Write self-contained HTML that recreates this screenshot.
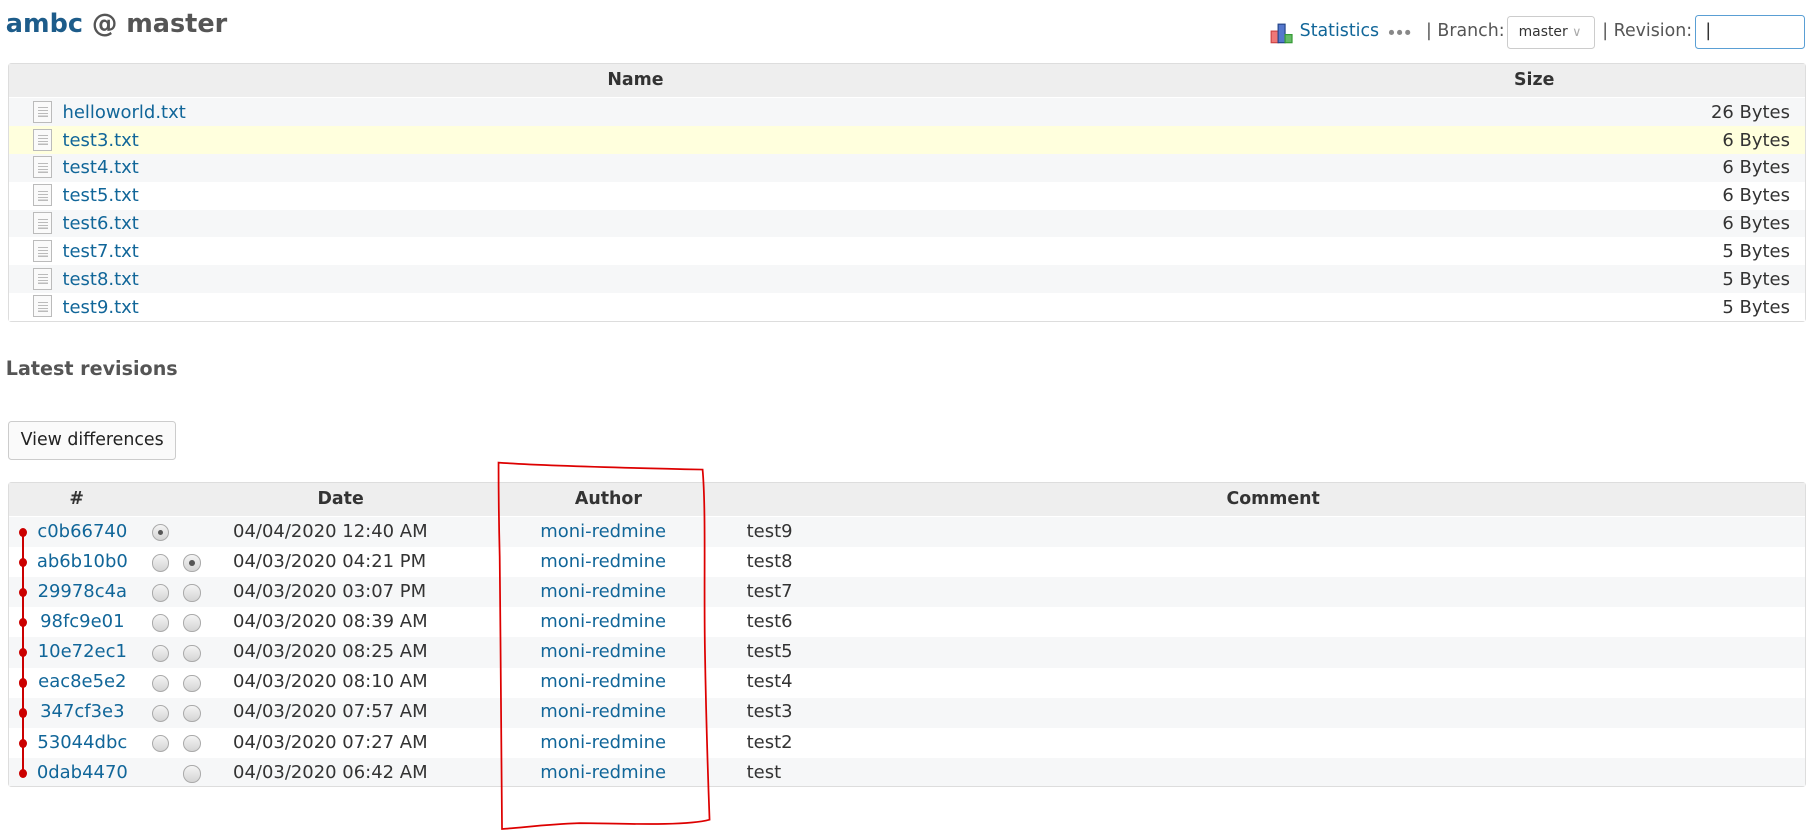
<!DOCTYPE html>
<html><head><meta charset="utf-8">
<style>
html,body{margin:0;padding:0;background:#fff;}
body{width:1568px;height:716px;overflow:hidden;zoom:1.1594;position:relative;font-family:"DejaVu Sans","Liberation Sans",sans-serif;font-size:15.5px;color:#333;}
.a{position:absolute;white-space:nowrap;}
a,.lk{color:#169;text-decoration:none;}
.t{border:1px solid #ddd;border-radius:3px;}
.row{position:absolute;left:0;right:0;}
.radio{position:absolute;width:15px;height:15px;border-radius:50%;border:1px solid #aaa;background:linear-gradient(#f4f4f4,#d4d4d4);box-sizing:border-box;}
.radio.on::after{content:"";position:absolute;left:4px;top:4px;width:5px;height:5px;border-radius:50%;background:#555;}
.fi{position:absolute;left:21px;width:16px;height:19px;border:1px solid #bbb;background:#fafafa;box-sizing:border-box;}
.fi::before{content:"";position:absolute;left:3px;right:3px;top:5px;height:9px;background:repeating-linear-gradient(#bbb 0 1px,transparent 1px 2.5px);}
.hd{font-size:15px;}
</style></head><body>

<div class="a" style="left:5px;top:8px;font-size:22px;font-weight:bold;color:#555;"><span style="color:#1d5c8a">ambc</span> @ master</div>

<svg class="a" style="left:1095px;top:20px" width="21" height="18" viewBox="0 0 21 18">
<rect x="1" y="7" width="6" height="10" fill="#e77" stroke="#c44"/>
<rect x="7" y="1" width="6" height="16" fill="#57c" stroke="#248"/>
<rect x="13" y="10" width="6" height="7" fill="#6b6" stroke="#393"/>
</svg>
<div class="a lk" style="left:1121px;top:18px;font-size:15px">Statistics</div>
<svg class="a" style="left:1197px;top:25px" width="20" height="6"><circle cx="3" cy="3" r="2.2" fill="#888"/><circle cx="10" cy="3" r="2.2" fill="#888"/><circle cx="17" cy="3" r="2.2" fill="#888"/></svg>
<div class="a" style="left:1230px;top:18px;color:#555;font-size:15px">| Branch:</div>
<div class="a" style="left:1300px;top:14px;width:76px;height:28px;border:1px solid #ccc;border-radius:3px;box-sizing:border-box;font-size:12px;line-height:26px;padding-left:9px;color:#333">master <span style="color:#aaa;font-size:11px">&#8744;</span></div>
<div class="a" style="left:1382px;top:18px;color:#555;font-size:15px">| Revision:</div>
<div class="a" style="left:1462px;top:13px;width:95px;height:29px;border:1px solid #5a9fd4;border-radius:3px;box-sizing:border-box;padding-left:8px;line-height:26px;color:#333">|</div>

<div class="a t" style="left:7px;top:54px;width:1549px;height:222px;">
<div class="row hd" style="top:0;height:29px;background:#eee;font-weight:bold;line-height:29px;">
<span class="a" style="left:516px;">Name</span><span class="a" style="left:1298px;">Size</span></div>
<div class="row" style="top:30px;height:24px;background:#f6f7f8"><div class="fi" style="top:2px"></div><span class="a lk" style="left:46px;top:3px">helloworld.txt</span><span class="a" style="right:13px;top:3px">26 Bytes</span></div>
<div class="row" style="top:54px;height:24px;background:#ffffdd"><div class="fi" style="top:2px"></div><span class="a lk" style="left:46px;top:3px">test3.txt</span><span class="a" style="right:13px;top:3px">6 Bytes</span></div>
<div class="row" style="top:78px;height:24px;background:#f6f7f8"><div class="fi" style="top:2px"></div><span class="a lk" style="left:46px;top:3px">test4.txt</span><span class="a" style="right:13px;top:3px">6 Bytes</span></div>
<div class="row" style="top:102px;height:24px;background:#fff"><div class="fi" style="top:2px"></div><span class="a lk" style="left:46px;top:3px">test5.txt</span><span class="a" style="right:13px;top:3px">6 Bytes</span></div>
<div class="row" style="top:126px;height:24px;background:#f6f7f8"><div class="fi" style="top:2px"></div><span class="a lk" style="left:46px;top:3px">test6.txt</span><span class="a" style="right:13px;top:3px">6 Bytes</span></div>
<div class="row" style="top:150px;height:24px;background:#fff"><div class="fi" style="top:2px"></div><span class="a lk" style="left:46px;top:3px">test7.txt</span><span class="a" style="right:13px;top:3px">5 Bytes</span></div>
<div class="row" style="top:174px;height:24px;background:#f6f7f8"><div class="fi" style="top:2px"></div><span class="a lk" style="left:46px;top:3px">test8.txt</span><span class="a" style="right:13px;top:3px">5 Bytes</span></div>
<div class="row" style="top:198px;height:24px;background:#fff"><div class="fi" style="top:2px"></div><span class="a lk" style="left:46px;top:3px">test9.txt</span><span class="a" style="right:13px;top:3px">5 Bytes</span></div>
</div>

<div class="a" style="left:5px;top:308px;font-size:16.5px;font-weight:bold;color:#555">Latest revisions</div>
<div class="a" style="left:7px;top:363px;width:145px;height:34px;border:1px solid #ccc;border-radius:3px;box-sizing:border-box;line-height:32px;text-align:center;background:#fafafa;color:#222;font-size:15px">View differences</div>

<div class="a t" style="left:7px;top:416px;width:1549px;height:261px;">
<div class="row hd" style="top:0;height:28px;background:#eee;font-weight:bold;line-height:28px;">
<span class="a" style="left:52px;">#</span><span class="a" style="left:266px;">Date</span><span class="a" style="left:488px;">Author</span><span class="a" style="left:1050px;">Comment</span></div>
<div class="row" style="top:29px;height:26px;background:#f6f7f8"></div>
<div class="row" style="top:81px;height:26px;background:#f6f7f8"></div>
<div class="row" style="top:133px;height:26px;background:#f6f7f8"></div>
<div class="row" style="top:185px;height:26px;background:#f6f7f8"></div>
<div class="row" style="top:237px;height:24px;background:#f6f7f8"></div>
<div class="a" style="left:11px;top:42px;width:2px;height:208px;background:#c00"></div>
</div>

<div id="revs"></div>
<script>
var d=[["c0b66740","04/04/2020 12:40 AM","test9",1,0],["ab6b10b0","04/03/2020 04:21 PM","test8",0,1],["29978c4a","04/03/2020 03:07 PM","test7",0,0],["98fc9e01","04/03/2020 08:39 AM","test6",0,0],["10e72ec1","04/03/2020 08:25 AM","test5",0,0],["eac8e5e2","04/03/2020 08:10 AM","test4",0,0],["347cf3e3","04/03/2020 07:57 AM","test3",0,0],["53044dbc","04/03/2020 07:27 AM","test2",0,0],["0dab4470","04/03/2020 06:42 AM","test",0,0]];
var h="";
d.forEach(function(r,i){var c=459+26*i;
h+='<div class="a" style="left:16px;top:'+(c-4)+'px;width:7px;height:8px;border-radius:50%;background:#c00"></div>';
h+='<div class="a lk" style="left:71px;top:'+(c-10)+'px;transform:translateX(-50%)">'+r[0]+'</div>';
if(i==0)h+='<div class="radio on" style="left:131px;top:'+(c-7)+'px"></div>';
else{if(i<8)h+='<div class="radio" style="left:131px;top:'+(c-7)+'px"></div>';
h+='<div class="radio'+(r[4]?' on':'')+'" style="left:158px;top:'+(c-7)+'px"></div>';}
h+='<div class="a" style="left:201px;top:'+(c-10)+'px">'+r[1]+'</div>';
h+='<div class="a lk" style="left:466px;top:'+(c-10)+'px">moni-redmine</div>';
h+='<div class="a" style="left:644px;top:'+(c-10)+'px">'+r[2]+'</div>';});
document.getElementById("revs").innerHTML=h;
</script>

<svg class="a" style="left:0;top:0" width="1568" height="716">
<path d="M430 399 C470 402 560 404 606 405 C609 440 607 500 608 560 C609 620 611 680 612 707 C590 713 530 710 500 710 C470 711 450 714 433 715 C432 650 432 560 431 480 C430 440 430 410 430 399 Z" fill="none" stroke="#d00" stroke-width="1.5"/>
</svg>
</body></html>
